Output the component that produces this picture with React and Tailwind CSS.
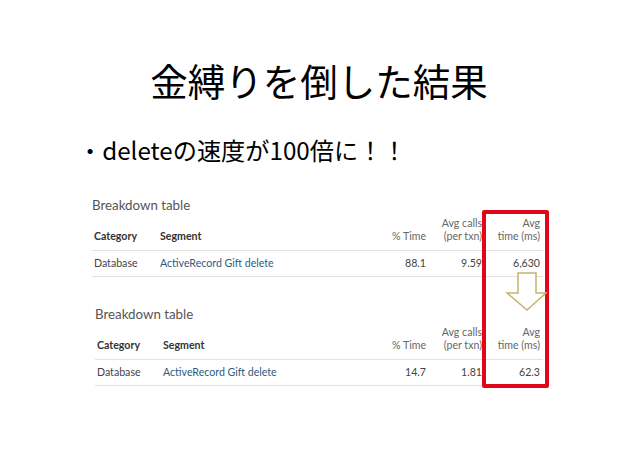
import React from "react";

const tf = { fontFamily: "Lato, 'Open Sans', sans-serif" };

function Table({ data }) {
  return (
    <div style={tf}>
      <div className="text-[13.3px] leading-[18px] text-[#555]">Breakdown table</div>
      <div className="mt-[3px] grid grid-cols-[68px_1fr_62px_56px_58px_3px] items-end border-b border-[#e2e2e2] pb-[7px] text-[10.6px] leading-[13px]">
        <div className="pl-[2px] font-bold text-[#333]">Category</div>
        <div className="font-bold text-[#333]">Segment</div>
        <div className="text-right text-[#666]">% Time</div>
        <div className="text-right text-[#666]">
          <div>Avg calls</div>
          <div>(per txn)</div>
        </div>
        <div className="text-right text-[#666]">
          <div>Avg</div>
          <div>time (ms)</div>
        </div>
        <div />
      </div>
      <div className="grid h-[26px] grid-cols-[68px_1fr_62px_56px_58px_3px] items-center border-b border-[#e2e2e2] text-[10.6px] leading-[13px]">
        <div className="pl-[2px] text-[#444]">Database</div>
        <div className="text-[#2b5d7d]">ActiveRecord Gift delete</div>
        <div className="text-right text-[#444]">{data[0]}</div>
        <div className="text-right text-[#444]">{data[1]}</div>
        <div className="text-right text-[#444]">{data[2]}</div>
        <div />
      </div>
    </div>
  );
}

export default function App() {
  return (
    <div className="relative h-[451px] w-[638px] overflow-hidden bg-white text-black">
      <div
        className="pt-[58px] text-center text-[37.5px] leading-[44px]"
        style={{ fontFamily: "'Noto Sans CJK JP', sans-serif" }}
      >
        金縛りを倒した結果
      </div>
      <div
        className="mt-[32px] pl-[78px] text-[24.2px] leading-[32px]"
        style={{ fontFamily: "'Noto Sans CJK JP', sans-serif" }}
      >
        ・deleteの速度が100倍に！！
      </div>
      <div className="ml-[92px] mt-[30px] w-[451px]">
        <Table data={["88.1", "9.59", "6,630"]} />
      </div>
      <div className="ml-[95px] mt-[28px] w-[448px]">
        <Table data={["14.7", "1.81", "62.3"]} />
      </div>

      <div className="absolute left-[482px] top-[210px] h-[178px] w-[67px] rounded-[2px] border-[4px] border-[#e2061a]" />
      <svg className="absolute left-[505px] top-[271px]" width="44" height="42" viewBox="0 0 44 42">
        <path
          d="M13 2 H31 V22 H41 L22 39 L2 22 H13 Z"
          fill="white"
          stroke="#c8b46c"
          strokeWidth="1.5"
          strokeLinejoin="miter"
        />
      </svg>
    </div>
  );
}
